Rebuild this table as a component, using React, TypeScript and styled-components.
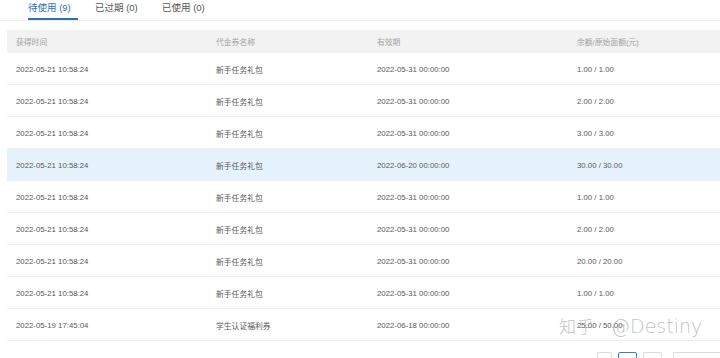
import React from "react";
import styled, { createGlobalStyle } from "styled-components";

const Global = createGlobalStyle`
  html, body { margin: 0; padding: 0; background: #fff; }
  body { font-family: "Liberation Sans", Arial, "Noto Sans CJK SC", sans-serif; overflow: hidden; }
`;

const Page = styled.div`
  position: relative;
  width: 720px;
  height: 358px;
  overflow: hidden;
  background: #fff;
`;

const Tabs = styled.div`
  display: flex;
  gap: 17px;
  padding-left: 28px;
  height: 21px;
  border-bottom: 1px solid #eeeeee;
  box-sizing: border-box;
`;

const Tab = styled.div<{ $active?: boolean }>`
  font-size: 9.5px;
  line-height: 15px;
  height: 20px;
  box-sizing: border-box;
  color: ${(p) => (p.$active ? "#2f6fb7" : "#555")};
  border-bottom: 2px solid ${(p) => (p.$active ? "#2f6fb7" : "transparent")};
  width: 50px;
  white-space: nowrap;
`;

const Table = styled.div`
  margin: 9px 0 0 7px;
`;

const Row = styled.div<{ $head?: boolean; $hl?: boolean }>`
  display: grid;
  grid-template-columns: 200px 161px 200px 1fr;
  padding-left: 9px;
  height: ${(p) => (p.$head ? "23px" : "32px")};
  align-items: center;
  box-sizing: border-box;
  background: ${(p) => (p.$head ? "#f2f2f2" : p.$hl ? "#e6f3fc" : "#fff")};
  border-bottom: ${(p) => (p.$head ? "none" : "1px solid #eeeeee")};
  font-size: 7.8px;
  padding-top: ${(p) => (p.$head ? "0" : "1px")};
  color: ${(p) => (p.$head ? "#a3a3a3" : "#5a5a5a")};
  white-space: nowrap;
`;

const Pager = styled.div`
  display: flex;
  gap: 6px;
  padding-left: 597px;
  margin-top: 11px;
`;

const PageBtn = styled.div<{ $active?: boolean; $w?: number }>`
  width: ${(p) => p.$w ?? 15}px;
  height: 20px;
  border: 1px solid ${(p) => (p.$active ? "#3a7bc8" : "#dcdcdc")};
  border-radius: 2px;
  box-sizing: border-box;
  background: #fff;
  flex-shrink: 0;
`;

const Watermark = styled.div`
  position: absolute;
  left: 559px;
  top: 313px;
  display: flex;
  align-items: center;
  gap: 16px;
  font-size: 19px;
  font-weight: 200;
  color: rgba(140, 140, 140, 0.55);
  font-family: "DejaVu Sans", "Noto Sans CJK SC", sans-serif;
  white-space: nowrap;
  pointer-events: none;
`;

const WmCjk = styled.span`
  font-family: "Noto Sans CJK SC", sans-serif;
  font-weight: 300;
  font-size: 17px;
  letter-spacing: 1px;
`;

const rows = [
  ["2022-05-21 10:58:24", "新手任务礼包", "2022-05-31 00:00:00", "1.00 / 1.00"],
  ["2022-05-21 10:58:24", "新手任务礼包", "2022-05-31 00:00:00", "2.00 / 2.00"],
  ["2022-05-21 10:58:24", "新手任务礼包", "2022-05-31 00:00:00", "3.00 / 3.00"],
  ["2022-05-21 10:58:24", "新手任务礼包", "2022-06-20 00:00:00", "30.00 / 30.00"],
  ["2022-05-21 10:58:24", "新手任务礼包", "2022-05-31 00:00:00", "1.00 / 1.00"],
  ["2022-05-21 10:58:24", "新手任务礼包", "2022-05-31 00:00:00", "2.00 / 2.00"],
  ["2022-05-21 10:58:24", "新手任务礼包", "2022-05-31 00:00:00", "20.00 / 20.00"],
  ["2022-05-21 10:58:24", "新手任务礼包", "2022-05-31 00:00:00", "1.00 / 1.00"],
  ["2022-05-19 17:45:04", "学生认证福利券", "2022-06-18 00:00:00", "25.00 / 50.00"],
];

export default function App() {
  return (
    <Page>
      <Global />
      <Tabs>
        <Tab $active>待使用 (9)</Tab>
        <Tab>已过期 (0)</Tab>
        <Tab>已使用 (0)</Tab>
      </Tabs>
      <Table>
        <Row $head>
          <span>获得时间</span>
          <span>代金券名称</span>
          <span>有效期</span>
          <span>余额/原始面额(元)</span>
        </Row>
        {rows.map((r, i) => (
          <Row key={i} $hl={i === 3}>
            {r.map((c, j) => (
              <span key={j}>{c}</span>
            ))}
          </Row>
        ))}
      </Table>
      <Pager>
        <PageBtn />
        <PageBtn $active $w={19} />
        <PageBtn $w={19} />
        <PageBtn $w={50} style={{ marginLeft: 5 }} />
      </Pager>
      <Watermark>
        <WmCjk>知乎</WmCjk>
        <span>@Destiny</span>
      </Watermark>
    </Page>
  );
}
